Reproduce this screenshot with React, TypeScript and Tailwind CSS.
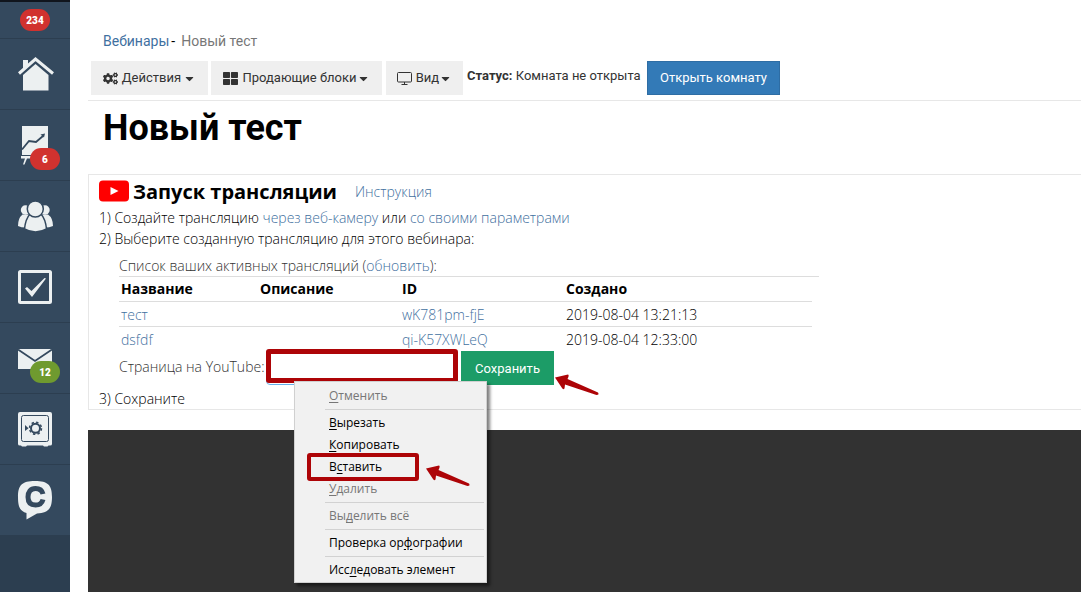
import { Fragment, useState } from "react";
import type { ReactNode } from "react";
import { FaCaretDown, FaCogs, FaThLarge } from "react-icons/fa";

interface Stream {
  name: string;
  id: string;
  created: string;
}

interface SidebarItem {
  label: string;
  icon: ReactNode;
  badge?: string;
  badgeColor?: string;
}

interface MenuItem {
  before: string;
  key: string;
  after: string;
  disabled?: boolean;
  marked?: boolean;
}

const streams: Stream[] = [
  { name: "тест", id: "wK781pm-fjE", created: "2019-08-04 13:21:13" },
  { name: "dsfdf", id: "qi-K57XWLeQ", created: "2019-08-04 12:33:00" },
];

const sidebarItems: SidebarItem[] = [
  {
    label: "Главная",
    icon: (
      <>
        <path d="M23 21h5v5l-5 4z" />
        <path d="M19 34.5 35.5 20 53 34.5" fill="none" stroke="#ecf0f1" strokeWidth="3" />
        <path d="M23 36 35.5 25 48.5 36v15.5H23z" />
      </>
    ),
  },
  {
    label: "Трафик",
    badge: "6",
    badgeColor: "bg-[#d1322f]",
    icon: (
      <>
        <path d="M22 16h26v29H22zM21 46h11v2.500h-5L24.500 54.500H23L25 48.500h-4z" />
        <path d="M22 39.500 29 31l7 1 7-6" fill="none" stroke="#34495e" strokeWidth="1.8" />
        <path d="m45 23.500-1 4-3.500-3z" fill="#34495e" />
      </>
    ),
  },
  {
    label: "Ученики",
    icon: (
      <>
        <circle cx="25.5" cy="29" r="4.700" />
        <circle cx="45" cy="29" r="4.700" />
        <path d="M22.500 33.500h7L26 46.500q-5 0-8-1.500 0-8 4.500-11.500zM48 33.500h-7l3.500 13q5 0 8.500-1.500 0-8-5-11.500z" />
        <path
          d="M30 33h11q4.500 5 5.500 15-5 3-11 3t-11-3q1-10 5.500-15z"
          stroke="#34495e"
          strokeWidth="1.5"
        />
        <circle cx="35.3" cy="28" r="8" stroke="#34495e" strokeWidth="1.5" />
      </>
    ),
  },
  {
    label: "Задачи",
    icon: (
      <>
        <rect x="19.5" y="19.500" width="31" height="31" rx="1" fill="none" stroke="#ecf0f1" strokeWidth="3" />
        <path d="m25 36.500 2-1.500 4.500 4L44.500 26l1.500.500L32 45z" />
      </>
    ),
  },
  {
    label: "Сообщения",
    badge: "12",
    badgeColor: "bg-[#6f9a2f]",
    icon: (
      <>
        <path d="M18 26h34v20H18z" />
        <path d="M18 26.500 35 38l17-11.500" fill="none" stroke="#34495e" strokeWidth="1.8" />
      </>
    ),
  },
  {
    label: "Продажи",
    icon: (
      <>
        <path d="M20 18h30q2 0 2 2v30q0 1.500-2 1.500h-1.500l-1 1h-3.500l-1-1H27l-1 1h-4l-1-1h-1q-2 0-2-1.500V20q0-2 2-2z" />
        <rect x="21.500" y="21.500" width="27" height="26" rx="2" fill="none" stroke="#34495e" />
        <path d="m25 31 3.500 3.300L25 37z" fill="#34495e" />
        <circle cx="35.500" cy="34.300" r="4.500" fill="none" stroke="#34495e" strokeWidth="2" />
        <circle
          cx="35.500"
          cy="34.300"
          r="6"
          fill="none"
          stroke="#34495e"
          strokeWidth="1.500"
          strokeDasharray="2.400 2.300"
        />
      </>
    ),
  },
  {
    label: "Чатиум",
    icon: (
      <>
        <path d="M35 16c13 0 17 4 17 16s-4 16-15 16.500L26.500 54.500V48C20 46 18 42 18 32c0-12 4-16 17-16z" />
        <path
          d="M43 29c-1-4-4-5.500-7.500-5.500-5 0-7.500 3.500-7.500 8.500s2.500 8 7.500 8c3.500 0 6.500-1.500 7.500-5.500"
          fill="none"
          stroke="#34495e"
          strokeWidth="5"
        />
      </>
    ),
  },
];

const menuGroups: MenuItem[][] = [
  [{ before: "", key: "О", after: "тменить", disabled: true }],
  [
    { before: "", key: "В", after: "ырезать" },
    { before: "", key: "К", after: "опировать" },
    { before: "В", key: "с", after: "тавить", marked: true },
    { before: "", key: "У", after: "далить", disabled: true },
  ],
  [{ before: "Вы", key: "д", after: "елить всё", disabled: true }],
  [{ before: "Проверка ор", key: "ф", after: "ографии" }],
  [{ before: "Исс", key: "л", after: "едовать элемент" }],
];

const linkClass = "text-[#3f70a0] hover:underline";
const toolbarButton =
  "flex h-[34px] items-center justify-center bg-[#efefef] text-[#333] hover:bg-[#e2e2e2]";

const Arrow = ({ className }: { className: string }) => (
  <svg className={className} viewBox="0 0 46 24" width="46" height="24" aria-hidden="true">
    <path
      d="M1 4.500 14 1.500Q15.500 2 13.500 6L44 19.500Q45.500 22 42.500 22L11 11.500 10.500 15.500Q9 17 8 15z"
      fill="#ad0407"
    />
  </svg>
);

const Sidebar = () => (
  <nav className="w-[70px] shrink-0 bg-[#2c3e50] font-['Roboto',sans-serif]">
    <div className="flex h-[39px] items-center justify-center border-t-2 border-b border-t-[#10151d] border-b-[#2c3e50] bg-[#34495e]">
      <span className="flex h-[22px] w-[30px] items-center justify-center rounded-full bg-[#d1322f] text-[10px] font-black text-white">
        234
      </span>
    </div>
    {sidebarItems.map((item) => (
      <a
        key={item.label}
        href="#"
        aria-label={item.label}
        className="relative block h-[71px] border-b border-[#2c3e50] bg-[#34495e]"
      >
        <svg viewBox="0 0 70 70" className="h-[70px] w-[70px]" fill="#ecf0f1">
          {item.icon}
        </svg>
        {item.badge && (
          <span
            className={`absolute top-[38px] left-[30px] flex h-[22px] w-[30px] items-center justify-center rounded-full text-[10px] font-black text-white ${item.badgeColor}`}
          >
            {item.badge}
          </span>
        )}
      </a>
    ))}
  </nav>
);

const ContextMenu = () => (
  <div
    role="menu"
    className="absolute top-[30px] left-7 z-10 w-[193px] border border-[#d0d0d0] bg-[#f1f1f1] pt-[3px] pb-px font-['Open_Sans',sans-serif] text-[12px] font-normal shadow-[3px_3px_3px_rgba(0,0,0,0.5)]"
  >
    {menuGroups.map((group, index) => (
      <Fragment key={index}>
        {index > 0 && <hr className="my-[2px] mr-[2px] ml-[30px] border-[#d2d2d2]" />}
        {group.map((item) => (
          <div key={item.before + item.key + item.after} className="relative">
            <button
              type="button"
              role="menuitem"
              disabled={item.disabled}
              className="block h-[22px] w-full pl-[34px] text-left leading-[22px] text-black disabled:text-[#777]"
            >
              {item.before}
              <span className="underline underline-offset-2">{item.key}</span>
              {item.after}
            </button>
            {item.marked && (
              <>
                <span className="pointer-events-none absolute -top-[3px] left-3 h-7 w-28 rounded-[3px] border-4 border-[#ad0407]" />
                <Arrow className="pointer-events-none absolute top-2 left-[130px]" />
              </>
            )}
          </div>
        ))}
      </Fragment>
    ))}
  </div>
);

const App: React.FC = () => {
  const [page, setPage] = useState<string>("");

  return (
    <div className="flex min-h-screen overflow-x-hidden bg-white">
      <Sidebar />
      <main className="ml-[18px] flex min-w-0 flex-1 flex-col">
        <header className="border-b border-[#e7e7e7] pt-[31px] pb-[5px] font-['Roboto',sans-serif] text-[13px]">
          <div className="flex h-[21px] items-center pl-[15px] text-[14px]">
            <a href="#" className={linkClass}>
              Вебинары
            </a>
            <span className="ml-[2px]">-</span>
            <span className="ml-[6px] text-[#777]">Новый тест</span>
          </div>
          <div className="mt-[9px] flex gap-[3px] pl-[3px]">
            <button type="button" className={`${toolbarButton} w-[117px]`}>
              <FaCogs size={15} className="mr-1" />
              Действия
              <FaCaretDown size={13} className="ml-[2px]" />
            </button>
            <button type="button" className={`${toolbarButton} w-[171px]`}>
              <FaThLarge size={15} className="mr-1" />
              Продающие блоки
              <FaCaretDown size={13} />
            </button>
            <button type="button" className={`${toolbarButton} ml-px w-[77px]`}>
              <svg width="15" height="13" viewBox="0 0 15 13" fill="none" stroke="#333" className="mr-1">
                <rect x=".5" y=".5" width="14" height="9.500" rx="1" />
                <path d="M4.500 12.500h6M7.500 10v2" />
              </svg>
              Вид
              <FaCaretDown size={13} />
            </button>
            <p className="ml-px w-[177px] pt-[5px] whitespace-nowrap text-[#333]">
              <strong>Статус:</strong> Комната не открыта
            </p>
            <button
              type="button"
              className="h-[34px] w-[133px] border border-[#2e6da4] bg-[#337ab7] text-white hover:bg-[#286090]"
            >
              Открыть комнату
            </button>
          </div>
        </header>

        <h1 className="pt-[5px] pl-[15px] font-['Roboto',sans-serif] text-[36px] leading-[44px] font-bold text-black">
          Новый тест
        </h1>

        <section className="mt-6 border-y border-l border-[#e7e7e7] pl-[10px] font-['Open_Sans',sans-serif] text-[14px] leading-[21px] font-light text-black">
          <div className="flex h-8 items-center">
            <svg width="30" height="22" viewBox="0 0 30 22" aria-hidden="true">
              <rect width="30" height="21" y=".5" rx="4" fill="#f00" />
              <path d="m11.500 7 8 4-8 4z" fill="#fff" />
            </svg>
            <h2 className="ml-1 text-[20px] font-bold">Запуск трансляции</h2>
            <a href="#" className={`ml-[18px] ${linkClass}`}>
              Инструкция
            </a>
          </div>
          <p>
            1) Создайте трансляцию{" "}
            <a href="#" className={linkClass}>
              через веб-камеру
            </a>{" "}
            или{" "}
            <a href="#" className={linkClass}>
              со своими параметрами
            </a>
          </p>
          <p>2) Выберите созданную трансляцию для этого вебинара:</p>

          <div className="mt-[6px] ml-5 max-w-[700px]">
            <p className="text-[#333]">
              Список ваших активных трансляций (
              <a href="#" className={linkClass}>
                обновить
              </a>
              ):
            </p>
            <div className="border-t border-[#ddd] pr-[7px]">
              <table className="w-full table-fixed text-left">
                <thead>
                  <tr className="h-6 border-b border-[#ddd]">
                    <th className="w-[139px] px-[2px] font-bold">Название</th>
                    <th className="w-[142px] px-[2px] font-bold">Описание</th>
                    <th className="w-[164px] px-[2px] font-bold">ID</th>
                    <th className="px-[2px] font-bold">Создано</th>
                  </tr>
                </thead>
                <tbody>
                  {streams.map((stream) => (
                    <tr key={stream.id} className="h-[25px] border-b border-[#ddd] last:border-b-0">
                      <td className="px-[2px] pt-px">
                        <a href="#" className={linkClass}>
                          {stream.name}
                        </a>
                      </td>
                      <td />
                      <td className="px-[2px] pt-px">
                        <a href="#" className={linkClass}>
                          {stream.id}
                        </a>
                      </td>
                      <td className="px-[2px] pt-px">{stream.created}</td>
                    </tr>
                  ))}
                </tbody>
              </table>
            </div>
          </div>

          <form className="ml-5 flex h-[34px]" onSubmit={(e) => e.preventDefault()}>
            <label htmlFor="youtube-page" className="w-[147px] pt-[5px] whitespace-nowrap text-[#333]">
              Страница на YouTube:
            </label>
            <div className="relative mr-[3px] w-48">
              <input
                id="youtube-page"
                type="text"
                value={page}
                onChange={(e) => setPage(e.target.value)}
                className="h-[34px] w-full rounded border border-[#66afe9] bg-white px-3 outline-none"
              />
              <span className="pointer-events-none absolute -top-[2px] left-0 h-[34px] w-full rounded-[3px] border-[5px] border-[#ad0407]" />
              <ContextMenu />
            </div>
            <div className="relative">
              <button
                type="submit"
                className="h-[34px] w-[93px] bg-[#1c9c67] font-['Roboto',sans-serif] text-[13px] font-normal text-white hover:bg-[#178557]"
              >
                Сохранить
              </button>
              <Arrow className="pointer-events-none absolute top-[22px] left-[93px]" />
            </div>
          </form>
          <p className="mt-[3px]">3) Сохраните</p>
        </section>

        <div className="mt-5 flex-1 bg-[#323232]" />
      </main>
    </div>
  );
};

export default App;
